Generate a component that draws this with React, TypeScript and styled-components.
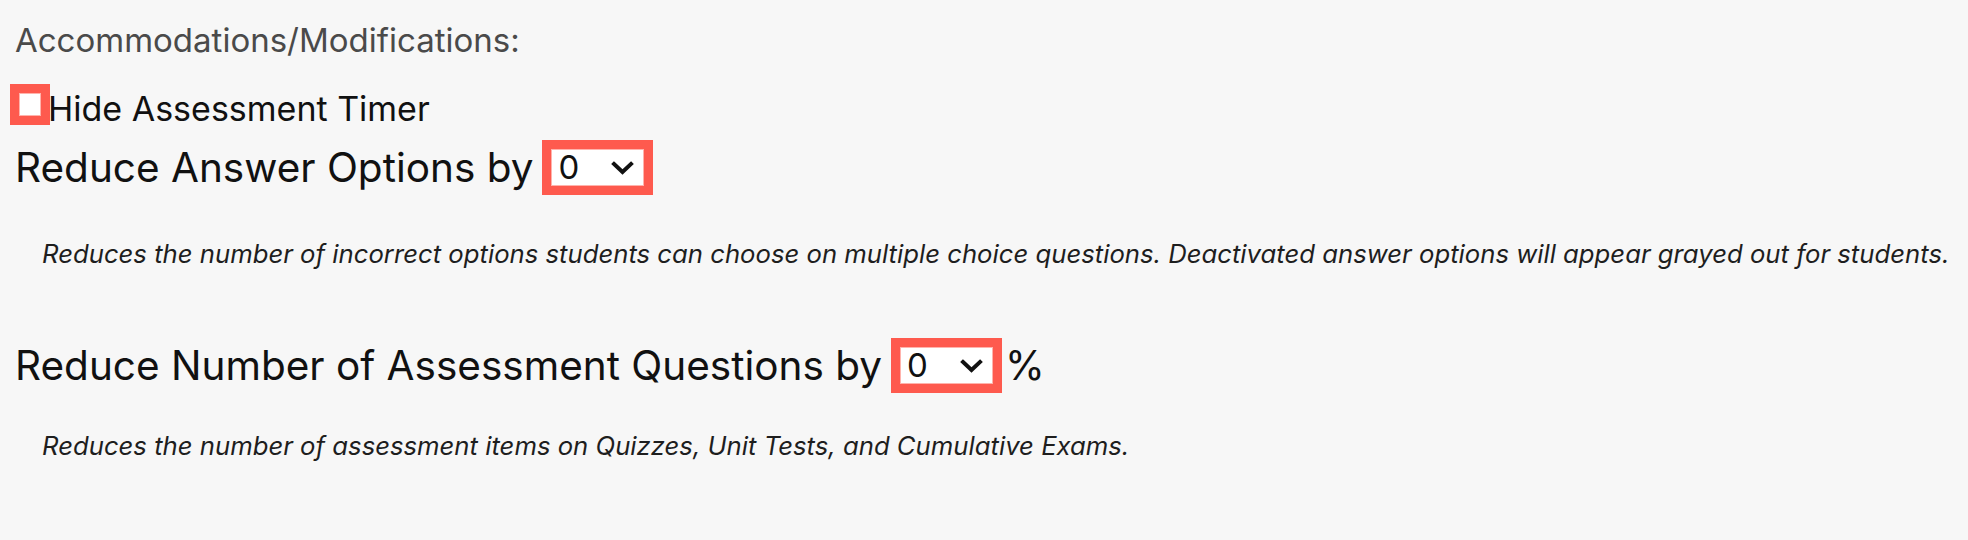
import * as React from 'react'
import styled, { createGlobalStyle } from 'styled-components'

const GlobalStyle = createGlobalStyle`
  html, body {
    margin: 0;
    padding: 0;
    background: #f7f7f7;
  }
  body {
    font-family: Inter, "Noto Sans", sans-serif;
    color: #111;
  }
`

const RED = '#fe5a4e'

const Page = styled.div`
  width: 1968px;
  height: 540px;
  box-sizing: border-box;
  padding: 20px 0 0 15px;
  background: #f7f7f7;
`

const Heading = styled.div`
  font-size: 33px;
  line-height: 40px;
  color: #4a4a4a;
`

const CheckRow = styled.label`
  display: flex;
  align-items: center;
  margin-top: 24px;
  font-size: 34px;
  line-height: 44px;
  color: #111;
`

const Checkbox = styled.input`
  appearance: none;
  -webkit-appearance: none;
  box-sizing: border-box;
  width: 40px;
  height: 41px;
  margin: 0 -2px 8px -5px;
  border: 9px solid ${RED};
  background: #fff;
  box-shadow: inset 0 0 0 1px #ffb3ac;
  cursor: pointer;
`

const Row = styled.div<{ $top: number }>`
  display: flex;
  align-items: center;
  gap: 9px;
  margin-top: ${p => p.$top}px;
  font-size: 40.5px;
  line-height: 55px;
  color: #111;
`

const SelectBox = styled.div`
  position: relative;
  box-sizing: border-box;
  width: 111px;
  height: 55px;
  border: 9px solid ${RED};
  background: #fff;
  box-shadow: inset 0 0 0 1px #ffb3ac;
`

const Select = styled.select`
  appearance: none;
  -webkit-appearance: none;
  display: block;
  box-sizing: border-box;
  width: 100%;
  height: 37px;
  margin: 0;
  padding: 0 0 0 7px;
  border: none;
  outline: none;
  background: transparent;
  font-family: Inter, "Noto Sans", sans-serif;
  font-size: 33px;
  line-height: 37px;
  color: #111;
  cursor: pointer;
`

const Chevron = styled.svg`
  position: absolute;
  right: 10px;
  top: 12px;
  width: 23px;
  height: 14px;
  pointer-events: none;
`

const Percent = styled.span`
  margin-left: -6px;
`

const Note = styled.p<{ $top: number }>`
  margin: ${p => p.$top}px 0 0 27px;
  font-family: Inter, "Noto Sans", sans-serif;
  font-style: italic;
  font-size: 25.7px;
  line-height: 32px;
  white-space: nowrap;
  color: #1e1e1e;
`

const Dropdown = () => (
  <SelectBox>
    <Select defaultValue="0">
      {[0, 1, 2].map(n => (
        <option key={n} value={n}>{n}</option>
      ))}
    </Select>
    <Chevron viewBox="0 0 23 14">
      <path d="M3 3 L11.5 11 L20 3" fill="none" stroke="#111" strokeWidth="4" strokeLinecap="square" />
    </Chevron>
  </SelectBox>
)

const App = () => (
  <Page>
    <GlobalStyle />
    <Heading>Accommodations/Modifications:</Heading>
    <CheckRow>
      <Checkbox type="checkbox" />
      Hide Assessment Timer
    </CheckRow>
    <Row $top={7}>
      <span>Reduce Answer Options by</span>
      <Dropdown />
    </Row>
    <Note $top={43}>
      Reduces the number of incorrect options students can choose on multiple choice questions. Deactivated answer options will appear grayed out for students.
    </Note>
    <Row $top={68}>
      <span>Reduce Number of Assessment Questions by</span>
      <Dropdown />
      <Percent>%</Percent>
    </Row>
    <Note $top={37}>
      Reduces the number of assessment items on Quizzes, Unit Tests, and Cumulative Exams.
    </Note>
  </Page>
)

export default App
